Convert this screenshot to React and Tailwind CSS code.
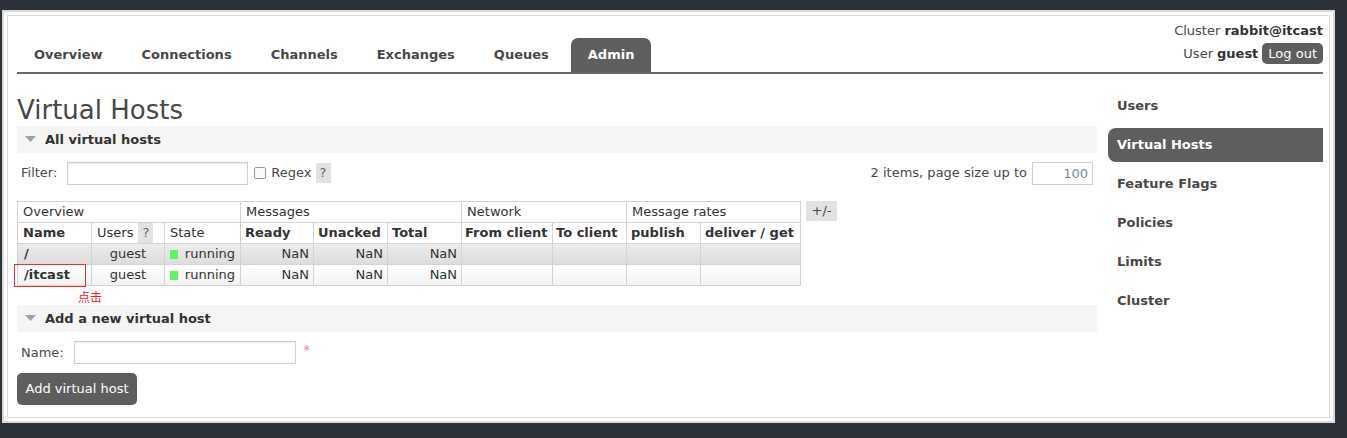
const font = { fontFamily: '"DejaVu Sans", Verdana, sans-serif' };

const tabs = ['Overview', 'Connections', 'Channels', 'Exchanges', 'Queues', 'Admin'];
const sideItems = ['Users', 'Virtual Hosts', 'Feature Flags', 'Policies', 'Limits', 'Cluster'];

const vhosts = [
  { name: '/', bg: 'bg-gradient-to-b from-[#ececec] to-[#dcdcdc]' },
  { name: '/itcast', bg: 'bg-gradient-to-b from-[#ffffff] to-[#f1f1f1]', marked: true },
];

function Triangle() {
  return (
    <svg width="11" height="7" viewBox="0 0 11 7" className="mr-[9px]">
      <path d="M0 0 L11 0 L5.5 6 Z" fill="#a0a0a0" />
    </svg>
  );
}

function SectionHeader({ title }) {
  return (
    <div className="flex h-[27px] items-center bg-[#f5f5f5] pl-[8px] text-[13px] font-bold text-[#333]">
      <Triangle />
      {title}
    </div>
  );
}

function HelpBox() {
  return <span className="inline-flex h-[20px] w-[15px] items-center justify-center bg-[#e2e2e2] text-[13px] font-normal text-[#666]">?</span>;
}

const cell = 'border border-[#d3d3d3] whitespace-nowrap overflow-hidden';

export default function App() {
  return (
    <div style={font} className="min-h-screen bg-[#2d3139] pb-[13px] pl-[2px] pr-[12px] pt-[10px]">
      <div className="border-2 border-[#dadada] bg-white p-[3px]">
        <div className="h-[403px] border border-[#dcdcdc] bg-white pl-[9px] pr-[6px] text-[13px] text-[#484848]">
          {/* header with tabs */}
          <div className="flex h-[58px] items-end justify-between border-b-2 border-[#6a6a6a]">
            <div className="flex gap-[5px]">
              {tabs.map((tab) => (
                <div
                  key={tab}
                  className={
                    tab === 'Admin'
                      ? 'flex h-[34px] items-center rounded-t-[7px] bg-[#5e5e5e] px-[17px] font-bold text-white'
                      : 'flex h-[34px] items-center px-[17px] font-bold text-[#484848]'
                  }
                >
                  {tab}
                </div>
              ))}
            </div>
            <div className="flex flex-col items-end pb-[8px]">
              <div className="mb-[4px] leading-[16px]">
                Cluster <span className="font-bold text-[#333]">rabbit@itcast</span>
              </div>
              <div className="flex items-center">
                User <span className="ml-[4px] font-bold text-[#333]">guest</span>
                <span className="ml-[4px] flex h-[21px] items-center rounded-[5px] bg-[#5e5e5e] px-[6px] text-white">Log out</span>
              </div>
            </div>
          </div>

          <div className="flex">
            {/* main column */}
            <div className="w-[1080px]">
              <h1 className="mt-[21px] h-[31px] text-[26px] leading-[31px] font-normal text-[#484848]">Virtual Hosts</h1>
              <SectionHeader title="All virtual hosts" />

              <div className="mt-[7px] flex h-[26px] items-center">
                <span className="ml-[4px]">Filter:</span>
                <input className="ml-[10px] h-[23px] w-[181px] border border-[#cfcfcf] shadow-[inset_0_1px_1px_rgba(0,0,0,0.08)]" />
                <span className="ml-[6px] inline-block h-[12px] w-[12px] rounded-[2px] border border-[#9a9a9a] bg-[#fafafa]" />
                <span className="ml-[5px] mr-[4px]">Regex</span>
                <HelpBox />
                <div className="ml-auto mr-[4px] flex items-center">
                  <span>2 items, page size up to</span>
                  <input
                    readOnly
                    value="100"
                    className="ml-[5px] h-[23px] w-[61px] border border-[#cfcfcf] pr-[4px] text-right text-[13px] text-[#6b8e99]"
                  />
                </div>
              </div>

              <div className="relative mt-[15px] flex items-start">
                <table className="w-[783px] table-fixed border-collapse text-[13px] text-[#333]">
                  <colgroup>
                    <col className="w-[74px]" />
                    <col className="w-[73px]" />
                    <col className="w-[76px]" />
                    <col className="w-[73px]" />
                    <col className="w-[74px]" />
                    <col className="w-[74px]" />
                    <col className="w-[91px]" />
                    <col className="w-[74px]" />
                    <col className="w-[74px]" />
                    <col className="w-[100px]" />
                  </colgroup>
                  <thead>
                    <tr className="h-[21px]">
                      <th colSpan={3} className={`${cell} px-[5px] text-left font-normal`}>Overview</th>
                      <th colSpan={3} className={`${cell} px-[5px] text-left font-normal`}>Messages</th>
                      <th colSpan={2} className={`${cell} px-[5px] text-left font-normal`}>Network</th>
                      <th colSpan={2} className={`${cell} px-[5px] text-left font-normal`}>Message rates</th>
                    </tr>
                    <tr className="h-[21px]">
                      <th className={`${cell} px-[5px] text-left font-bold`}>Name</th>
                      <th className={`${cell} px-[5px] text-left font-normal`}>
                        <span className="flex items-center gap-[5px]">
                          Users <HelpBox />
                        </span>
                      </th>
                      <th className={`${cell} px-[5px] text-left font-normal`}>State</th>
                      <th className={`${cell} px-[4px] text-left font-bold`}>Ready</th>
                      <th className={`${cell} px-[4px] text-left font-bold`}>Unacked</th>
                      <th className={`${cell} px-[4px] text-left font-bold`}>Total</th>
                      <th className={`${cell} px-[3px] text-left font-bold`}>From client</th>
                      <th className={`${cell} px-[3px] text-left font-bold`}>To client</th>
                      <th className={`${cell} px-[4px] text-left font-bold`}>publish</th>
                      <th className={`${cell} px-[4px] text-left font-bold`}>deliver / get</th>
                    </tr>
                  </thead>
                  <tbody>
                    {vhosts.map((vhost) => (
                      <tr key={vhost.name} className={`h-[21px] ${vhost.bg}`}>
                        <td className={`${cell} px-[6px] font-bold`}>{vhost.name}</td>
                        <td className={`${cell} text-center`}>guest</td>
                        <td className={`${cell} px-[5px]`}>
                          <span className="flex items-center">
                            <span className="mr-[7px] inline-block h-[9px] w-[9px] bg-[#66f266]" />
                            running
                          </span>
                        </td>
                        <td className={`${cell} px-[4px] text-right`}>NaN</td>
                        <td className={`${cell} px-[4px] text-right`}>NaN</td>
                        <td className={`${cell} px-[4px] text-right`}>NaN</td>
                        <td className={cell} />
                        <td className={cell} />
                        <td className={cell} />
                        <td className={cell} />
                      </tr>
                    ))}
                  </tbody>
                </table>
                <span className="ml-[5px] flex h-[20px] w-[31px] items-center justify-center bg-[#e2e2e2]">+/-</span>

                {/* annotation around /itcast */}
                <div className="absolute left-[-3px] top-[63px] h-[23px] w-[72px] border-[1.5px] border-[#e8313a]" />
                <span
                  className="absolute left-[61px] top-[89px] text-[12px] leading-[14px] text-[#f0202a]"
                  style={{ fontFamily: '"Noto Sans CJK SC", sans-serif' }}
                >
                  点击
                </span>
              </div>

              <div className="mt-[19px]">
                <SectionHeader title="Add a new virtual host" />
              </div>

              <div className="mt-[9px] flex h-[23px] items-center">
                <span className="ml-[4px]">Name:</span>
                <input className="ml-[10px] h-[23px] w-[222px] border border-[#cfcfcf] shadow-[inset_0_1px_1px_rgba(0,0,0,0.08)]" />
                <span className="ml-[8px] self-start text-[12px] text-[#f77]">*</span>
              </div>

              <button className="mt-[9px] h-[32px] w-[120px] rounded-[5px] bg-[#5e5e5e] text-[13px] text-white">Add virtual host</button>
            </div>

            {/* sidebar */}
            <div className="ml-[11px] mt-[15px] flex w-[215px] flex-col gap-[5px]">
              {sideItems.map((item) => (
                <div
                  key={item}
                  className={
                    item === 'Virtual Hosts'
                      ? 'flex h-[34px] items-center rounded-l-[8px] bg-[#5e5e5e] pl-[9px] font-bold text-white'
                      : 'flex h-[34px] items-center pl-[9px] font-bold text-[#484848]'
                  }
                >
                  {item}
                </div>
              ))}
            </div>
          </div>
        </div>
      </div>
    </div>
  );
}
